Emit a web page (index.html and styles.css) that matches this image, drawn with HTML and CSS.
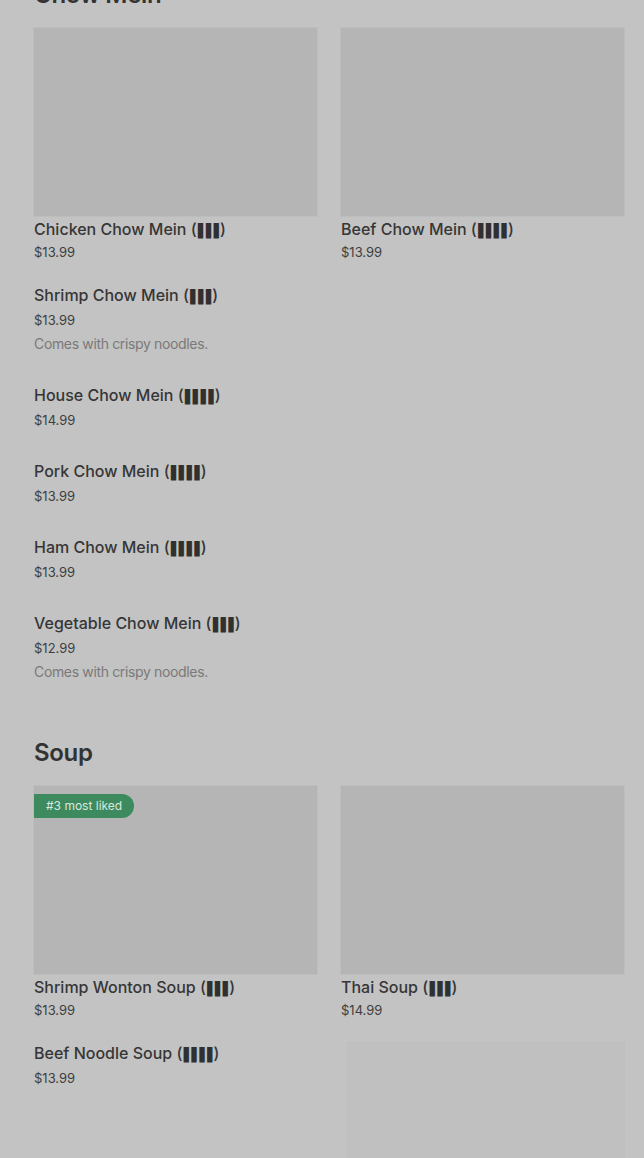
FILE: index.html
```html
<!DOCTYPE html>
<html lang="en">
<head>
<meta charset="utf-8">
<title>Menu</title>
<link rel="stylesheet" href="styles.css">
</head>
<body>
<main class="menu">
  <section class="section">
    <h2 class="section-title">Chow Mein</h2>
    <div class="grid">
      <div class="card">
        <div class="thumb"></div>
        <div class="item-title">Chicken Chow Mein (<span class="tofu">▮▮▮</span>)</div>
        <div class="card-price">$13.99</div>
      </div>
      <div class="card">
        <div class="thumb"></div>
        <div class="item-title">Beef Chow Mein (<span class="tofu">▮▮▮▮</span>)</div>
        <div class="card-price">$13.99</div>
      </div>
    </div>
    <div class="list">
      <div class="row">
        <div class="row-text">
          <div class="item-title">Shrimp Chow Mein (<span class="tofu">▮▮▮</span>)</div>
          <div class="price">$13.99</div>
          <div class="desc">Comes with crispy noodles.</div>
        </div>
      </div>
      <div class="row">
        <div class="row-text">
          <div class="item-title">House Chow Mein (<span class="tofu">▮▮▮▮</span>)</div>
          <div class="price">$14.99</div>
        </div>
      </div>
      <div class="row">
        <div class="row-text">
          <div class="item-title">Pork Chow Mein (<span class="tofu">▮▮▮▮</span>)</div>
          <div class="price">$13.99</div>
        </div>
      </div>
      <div class="row">
        <div class="row-text">
          <div class="item-title">Ham Chow Mein (<span class="tofu">▮▮▮▮</span>)</div>
          <div class="price">$13.99</div>
        </div>
      </div>
      <div class="row">
        <div class="row-text">
          <div class="item-title">Vegetable Chow Mein (<span class="tofu">▮▮▮</span>)</div>
          <div class="price">$12.99</div>
          <div class="desc">Comes with crispy noodles.</div>
        </div>
      </div>
    </div>
  </section>

  <section class="section">
    <h2 class="section-title">Soup</h2>
    <div class="grid">
      <div class="card">
        <div class="thumb">
          <span class="badge">#3 most liked</span>
        </div>
        <div class="item-title">Shrimp Wonton Soup (<span class="tofu">▮▮▮</span>)</div>
        <div class="card-price">$13.99</div>
      </div>
      <div class="card">
        <div class="thumb"></div>
        <div class="item-title">Thai Soup (<span class="tofu">▮▮▮</span>)</div>
        <div class="card-price">$14.99</div>
      </div>
    </div>
    <div class="list">
      <div class="row row-with-image">
        <div class="row-text">
          <div class="item-title">Beef Noodle Soup (<span class="tofu">▮▮▮▮</span>)</div>
          <div class="price">$13.99</div>
        </div>
        <div class="row-thumb"></div>
      </div>
    </div>
  </section>
</main>
</body>
</html>
```

FILE: styles.css
```css
* {
  box-sizing: border-box;
}

html, body {
  margin: 0;
  padding: 0;
  background: #c3c3c3;
  overflow: hidden;
}

body {
  font-family: Inter, "Noto Sans", "Liberation Sans", sans-serif;
  color: #333333;
}

.menu {
  margin-top: -21px;
  padding: 0 20px 0 34px;
  display: flex;
  flex-direction: column;
  gap: 40px;
}

.section {
  display: flex;
  flex-direction: column;
}

.section-title {
  margin: 0 0 17px;
  font-size: 24px;
  line-height: 32px;
  font-weight: 600;
  color: #333333;
  letter-spacing: -0.3px;
}

.grid {
  display: grid;
  grid-template-columns: 1fr 1fr;
  column-gap: 24px;
  padding-bottom: 6px;
}

.card {
  display: flex;
  flex-direction: column;
}

.thumb {
  position: relative;
  height: 188px;
  background: #b5b5b5;
  box-shadow: 0 0 0 1px #bdbdbd;
  margin-bottom: 1px;
}

.badge {
  position: absolute;
  left: 0;
  top: 8px;
  height: 24px;
  padding: 0 12px;
  background: #3d8a5f;
  color: #d9e8de;
  font-size: 12px;
  line-height: 24px;
  border-radius: 0 12px 12px 0;
}

.item-title {
  height: 24px;
  font-size: 16px;
  line-height: 24px;
  font-weight: 500;
  color: #363636;
  white-space: nowrap;
}

.tofu {
  display: inline-block;
  font-family: "DejaVu Sans", sans-serif;
  font-size: 14.5px;
  line-height: 16px;
  letter-spacing: -0.2px;
  color: #303030;
  transform: scaleY(1.4);
  transform-origin: 50% 70%;
}

.card-price {
  font-size: 13px;
  line-height: 22px;
  color: #3e3e3e;
}

.list {
  display: flex;
  flex-direction: column;
}

.row {
  display: flex;
  justify-content: space-between;
  padding: 14px 0 13px;
}

.row-text {
  display: flex;
  flex-direction: column;
  gap: 1px;
}

.price {
  font-size: 13px;
  line-height: 24px;
  color: #3e3e3e;
}

.desc {
  margin-top: -1px;
  font-size: 14px;
  line-height: 24px;
  letter-spacing: -0.35px;
  color: #7a7a7a;
}

.row-thumb {
  width: 276px;
  height: 140px;
  margin-top: 2px;
  background: #c0c0c0;
  box-shadow: 0 0 0 1px #bebebe;
}
```
